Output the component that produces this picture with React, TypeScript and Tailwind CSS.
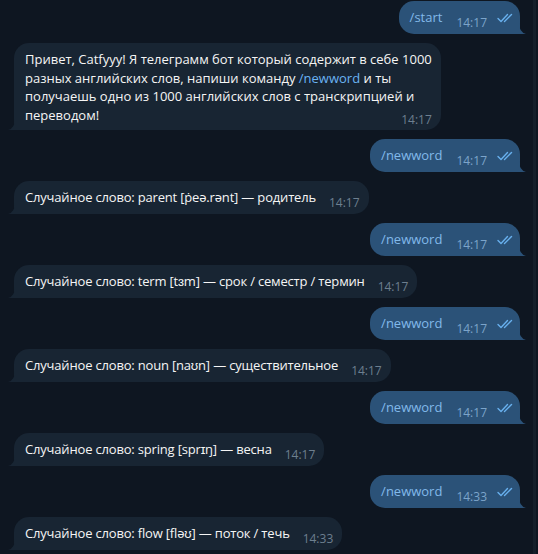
import React from "react";

const Checks = () => (
  <svg width="16" height="10" viewBox="0 0 16 10" className="ml-[10px] mb-[4px] shrink-0" fill="none" stroke="#68b0ee" strokeWidth="1.4" strokeLinecap="round" strokeLinejoin="round">
    <path d="M1 5.5 L4 8.5 L10.5 1.5" />
    <path d="M7.5 8.5 L14.5 1.5" />
  </svg>
);

const OutTail = () => (
  <svg width="7" height="11" viewBox="0 0 7 11" className="absolute right-[-6px] bottom-0">
    <path d="M0 0 Q0 9 7 11 L0 11 Z" fill="#2b5278" />
  </svg>
);

const InTail = () => (
  <svg width="7" height="11" viewBox="0 0 7 11" className="absolute left-[-6px] bottom-0">
    <path d="M7 0 Q7 9 0 11 L7 11 Z" fill="#182533" />
  </svg>
);

const Out = ({ text, time }: { text: string; time: string }) => (
  <div className="flex justify-end">
    <div className="relative bg-[#2b5278] rounded-[15px] rounded-br-none pl-[11px] pr-[7px] pt-[7px] pb-[7px] flex items-end">
      <span className="text-[13px] leading-[19px] text-[#82b9ea]">{text}</span>
      <span className="ml-[14px] text-[12px] leading-[14px] text-[#7ca4ca] relative top-[3px]">{time}</span>
      <Checks />
      <OutTail />
    </div>
  </div>
);

const In = ({ text, time }: { text: string; time: string }) => (
  <div className="flex justify-start">
    <div className="relative bg-[#182533] rounded-[15px] rounded-bl-none pl-[11px] pr-[9px] pt-[7px] pb-[7px] flex items-end">
      <span className="text-[13px] leading-[19px] text-[#f5f5f5] whitespace-nowrap tracking-[-0.18px]">{text}</span>
      <span className="ml-[13px] text-[12px] leading-[14px] text-[#6d7f8f] relative top-[3px]">{time}</span>
      <InTail />
    </div>
  </div>
);

const words = [
  "Случайное слово: parent [ṗeə.rənt] — родитель",
  "Случайное слово: term [tɜm] — срок / семестр / термин",
  "Случайное слово: noun [naʊn] — существительное",
  "Случайное слово: spring [sprɪŋ] — весна",
];

export default function App() {
  return (
    <div className="relative w-[538px] h-[554px] overflow-hidden bg-[#0e1621] font-['Open_Sans',sans-serif]">
      <div className="flex flex-col gap-[9px] pl-[14px] pr-[18px] pt-[1px]">
        <Out text="/start" time="14:17" />
        <div className="flex justify-start">
          <div className="relative bg-[#182533] rounded-[15px] rounded-bl-none pl-[11px] pr-[9px] pt-[7px] pb-[6px] text-[13px] leading-[18.5px] text-[#f5f5f5] whitespace-nowrap">
            <div>Привет, Catfyyy! Я телеграмм бот который содержит в себе 1000</div>
            <div>
              разных английских слов, напиши команду <span className="text-[#6ab3f3]">/newword</span> и ты
            </div>
            <div>получаешь одно из 1000 английских слов с транскрипцией и</div>
            <div className="flex items-end justify-between">
              <span>переводом!</span>
              <span className="text-[12px] leading-[14px] text-[#6d7f8f] relative top-[3px]">14:17</span>
            </div>
            <InTail />
          </div>
        </div>
        {words.map((w) => (
          <React.Fragment key={w}>
            <Out text="/newword" time="14:17" />
            <In text={w} time="14:17" />
          </React.Fragment>
        ))}
        <Out text="/newword" time="14:33" />
        <In text="Случайное слово: flow [fləʊ] — поток / течь" time="14:33" />
      </div>
      <div className="absolute right-[2px] top-0 w-[3px] h-full bg-[#151f2a]" />
    </div>
  );
}
